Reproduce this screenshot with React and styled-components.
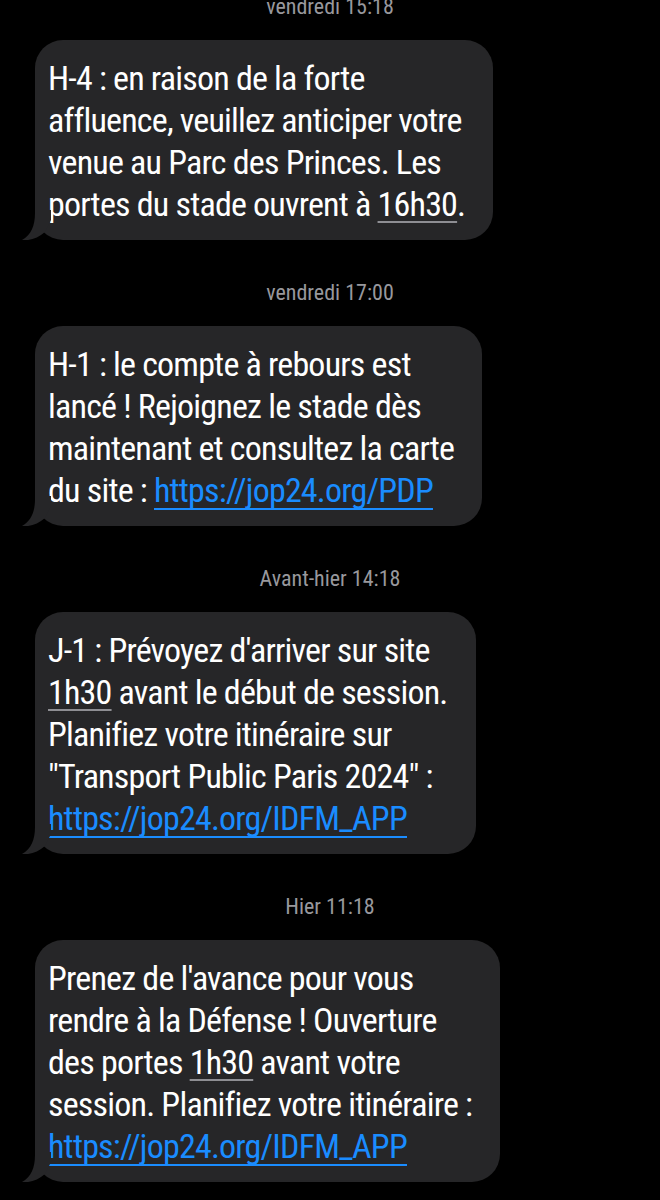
import React from 'react';
import styled, { createGlobalStyle } from 'styled-components';

const GlobalStyle = createGlobalStyle`
  html, body {
    margin: 0;
    padding: 0;
    background: #000;
  }
  body {
    font-family: "Roboto Condensed", "DejaVu Sans Condensed", "Liberation Sans Narrow", "Roboto", sans-serif;
    font-variant-ligatures: none;
    -webkit-font-smoothing: antialiased;
  }
`;

const Screen = styled.div`
  width: 660px;
  height: 1200px;
  overflow: hidden;
  background: #000;
`;

// the thread is scrolled a few pixels, so the first timestamp is cut at the top
const Thread = styled.div`
  display: flex;
  flex-direction: column;
  align-items: flex-start;
  margin-top: -6px;
  padding-left: 35px;
`;

const Timestamp = styled.div`
  align-self: stretch;
  margin-left: -35px;
  text-align: center;
  color: #98989d;
  font-size: 22px;
  line-height: 26px;
  margin-top: ${(props) => (props.first ? '0' : '40px')};
`;

const Bubble = styled.div`
  position: relative;
  margin-top: 20px;
  padding: 17px 28px 15px 13px;
  background: #262628;
  border-radius: 28px;
  color: #fff;
  font-size: 34px;
  letter-spacing: -0.8px;
  line-height: 42px;
`;

const Tail = styled.svg`
  position: absolute;
  left: -14px;
  bottom: 0;
  width: 30px;
  height: 30px;
`;

const Line = styled.div`
  white-space: nowrap;
`;

const Detected = styled.span`
  text-decoration: underline;
  text-decoration-color: #8e8e93;
  text-decoration-thickness: 2px;
  text-underline-offset: 5px;
  text-decoration-skip-ink: none;
`;

// underline drawn as a border so it runs under the descenders like iOS does
const Link = styled.span`
  display: inline-block;
  line-height: 36px;
  color: #1a8cff;
  border-bottom: 2px solid #1a8cff;
`;

const messages = [
  {
    time: 'vendredi 15:18',
    lines: [
      ['H-4 : en raison de la forte'],
      ['affluence, veuillez anticiper votre'],
      ['venue au Parc des Princes. Les'],
      ['portes du stade ouvrent à ', { detected: '16h30' }, '.'],
    ],
  },
  {
    time: 'vendredi 17:00',
    lines: [
      ['H-1 : le compte à rebours est'],
      ['lancé ! Rejoignez le stade dès'],
      ['maintenant et consultez la carte'],
      ['du site : ', { link: 'https://jop24.org/PDP' }],
    ],
  },
  {
    time: 'Avant-hier 14:18',
    lines: [
      ["J-1 : Prévoyez d'arriver sur site"],
      [{ detected: '1h30' }, ' avant le début de session.'],
      ['Planifiez votre itinéraire sur'],
      ['"Transport Public Paris 2024" :'],
      [{ link: 'https://jop24.org/IDFM_APP' }],
    ],
  },
  {
    time: 'Hier 11:18',
    lines: [
      ["Prenez de l'avance pour vous"],
      ['rendre à la Défense ! Ouverture'],
      ['des portes ', { detected: '1h30' }, ' avant votre'],
      ['session. Planifiez votre itinéraire :'],
      [{ link: 'https://jop24.org/IDFM_APP' }],
    ],
  },
];

const Segment = ({ part }) => {
  if (typeof part === 'string') return part;
  if (part.link) return <Link>{part.link}</Link>;
  return <Detected>{part.detected}</Detected>;
};

const Message = ({ lines }) => (
  <Bubble>
    {lines.map((parts, i) => (
      <Line key={i}>
        {parts.map((part, j) => (
          <Segment key={j} part={part} />
        ))}
      </Line>
    ))}
    <Tail viewBox="0 0 30 30">
      <path d="M14 0 L14 3 C14 16 10 25 1 30 C9 31 17 28 24 22 L30 10 L30 0 Z" fill="#262628" />
    </Tail>
  </Bubble>
);

const App = () => (
  <Screen>
    <GlobalStyle />
    <Thread>
      {messages.map((m, i) => (
        <React.Fragment key={m.time}>
          <Timestamp first={i === 0}>{m.time}</Timestamp>
          <Message lines={m.lines} />
        </React.Fragment>
      ))}
    </Thread>
  </Screen>
);

export default App;
